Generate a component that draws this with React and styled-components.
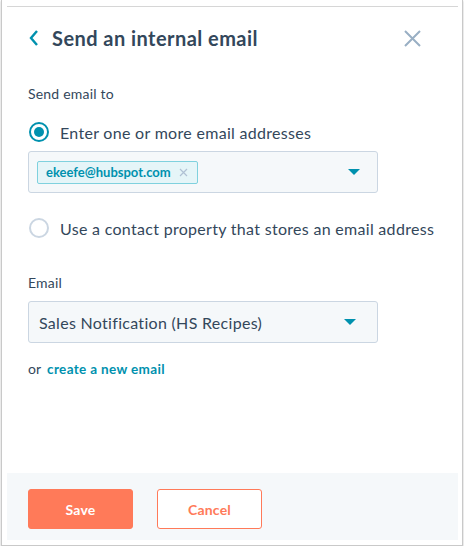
import React from "react";
import styled, { createGlobalStyle } from "styled-components";

const Global = createGlobalStyle`
  html, body {
    margin: 0;
    padding: 0;
    background: #fff;
  }
  body {
    font-family: Lato, "Open Sans", sans-serif;
    color: #33475b;
  }
`;

const Window = styled.div`
  box-sizing: border-box;
  margin-left: 1px;
  width: 462px;
  height: 546px;
  border: 1px solid #c9c9c9;
  border-top: none;
  box-shadow: 0 1px 2px rgba(0, 0, 0, 0.25);
  padding: 6px 4px 5px 5px;
  display: flex;
`;

const Panel = styled.div`
  flex: 1;
  display: flex;
  flex-direction: column;
  border-top: 1px solid #d6d6d6;
`;

const Body = styled.div`
  flex: 1;
  padding: 0 21px;
`;

const Header = styled.div`
  display: flex;
  align-items: center;
  height: 62px;
  margin-bottom: 16px;
`;

const Back = styled.button`
  border: none;
  background: none;
  padding: 0;
  width: 24px;
  display: flex;
  align-items: center;
  cursor: pointer;
`;

const Title = styled.h1`
  flex: 1;
  margin: 0;
  font-size: 20px;
  font-weight: 700;
  color: #33475b;
  letter-spacing: 0.45px;
`;

const Close = styled.button`
  border: none;
  background: none;
  padding: 0;
  margin-right: 16px;
  display: flex;
  cursor: pointer;
`;

const Label = styled.div`
  font-size: 14px;
  line-height: 18px;
  letter-spacing: 0.2px;
  margin-bottom: ${(p) => p.gap || 10}px;
`;

const RadioRow = styled.label`
  display: flex;
  align-items: center;
  height: 26px;
  font-size: 16px;
  letter-spacing: 0.3px;
  color: #33475b;
  margin-bottom: ${(p) => p.gap || 0}px;
`;

const RadioDot = styled.span`
  box-sizing: border-box;
  width: 20px;
  height: 20px;
  border-radius: 50%;
  margin-left: 1px;
  margin-right: 11px;
  border: 2px solid ${(p) => (p.checked ? "#0091ae" : "#cbd6e2")};
  display: flex;
  align-items: center;
  justify-content: center;
  background: #fff;
  &::after {
    content: "";
    display: ${(p) => (p.checked ? "block" : "none")};
    width: 10px;
    height: 10px;
    border-radius: 50%;
    background: #0091ae;
  }
`;

const Select = styled.div`
  box-sizing: border-box;
  width: 350px;
  height: 42px;
  background: #f5f8fa;
  border: 1px solid #cbd6e2;
  border-radius: 3px;
  display: flex;
  align-items: center;
  padding: 0 ${(p) => p.pr}px 0 ${(p) => p.pl}px;
  margin-bottom: ${(p) => p.gap || 0}px;
`;

const Value = styled.span`
  flex: 1;
  font-size: 16px;
  letter-spacing: 0.3px;
  color: #33475b;
`;

const Tag = styled.span`
  box-sizing: border-box;
  height: 23px;
  display: flex;
  align-items: center;
  background: #e5f5f8;
  border: 1px solid #7fd1de;
  border-radius: 2px;
  padding: 0 9px 0 8px;
  font-size: 13px;
  font-weight: 700;
  color: #0091ae;
  gap: 8px;
`;

const Spacer = styled.span`
  flex: 1;
`;

const Caret = styled.span`
  width: 0;
  height: 0;
  border-left: 6px solid transparent;
  border-right: 6px solid transparent;
  border-top: 6px solid #0091ae;
`;

const Hint = styled.div`
  font-size: 14px;
  margin-top: 17px;
  color: #33475b;
`;

const Link = styled.a`
  color: #0091ae;
  font-weight: 700;
  font-size: 13.5px;
  letter-spacing: 0.35px;
  text-decoration: none;
  margin-left: 6px;
`;

const Footer = styled.div`
  box-sizing: border-box;
  height: 67px;
  background: #f5f8fa;
  display: flex;
  align-items: flex-start;
  padding: 16px 21px 0;
  gap: 24px;
`;

const Button = styled.button`
  box-sizing: border-box;
  width: 105px;
  height: 40px;
  border-radius: 3px;
  font-family: Lato, sans-serif;
  font-size: 14px;
  font-weight: 700;
  letter-spacing: 0.2px;
  border: 1px solid #ff7a59;
  background: ${(p) => (p.primary ? "#ff7a59" : "#fff")};
  color: ${(p) => (p.primary ? "#fff" : "#ff7a59")};
  cursor: pointer;
`;

export default function App() {
  return (
    <>
      <Global />
      <Window>
        <Panel>
          <Body>
            <Header>
              <Back>
                <svg width="12" height="18" viewBox="0 0 12 18">
                  <path d="M9 2 L3 9 L9 16" fill="none" stroke="#0091ae" strokeWidth="2.4" />
                </svg>
              </Back>
              <Title>Send an internal email</Title>
              <Close>
                <svg width="17" height="17" viewBox="0 0 17 17">
                  <path d="M1 1 L16 16 M16 1 L1 16" stroke="#99afc4" strokeWidth="2" />
                </svg>
              </Close>
            </Header>

            <Label gap={16}>Send email to</Label>
            <RadioRow gap={6}>
              <RadioDot checked />
              Enter one or more email addresses
            </RadioRow>
            <Select pl={8} pr={17} gap={22}>
              <Tag>
                ekeefe@hubspot.com
                <svg width="9" height="9" viewBox="0 0 9 9">
                  <path d="M1 1 L8 8 M8 1 L1 8" stroke="#b0c1d4" strokeWidth="1.2" />
                </svg>
              </Tag>
              <Spacer />
              <Caret />
            </Select>
            <RadioRow gap={33}>
              <RadioDot />
              Use a contact property that stores an email address
            </RadioRow>

            <Label gap={9}>Email</Label>
            <Select pl={10} pr={21}>
              <Value>Sales Notification (HS Recipes)</Value>
              <Caret />
            </Select>
            <Hint>
              or<Link href="#">create a new email</Link>
            </Hint>
          </Body>
          <Footer>
            <Button primary>Save</Button>
            <Button>Cancel</Button>
          </Footer>
        </Panel>
      </Window>
    </>
  );
}
